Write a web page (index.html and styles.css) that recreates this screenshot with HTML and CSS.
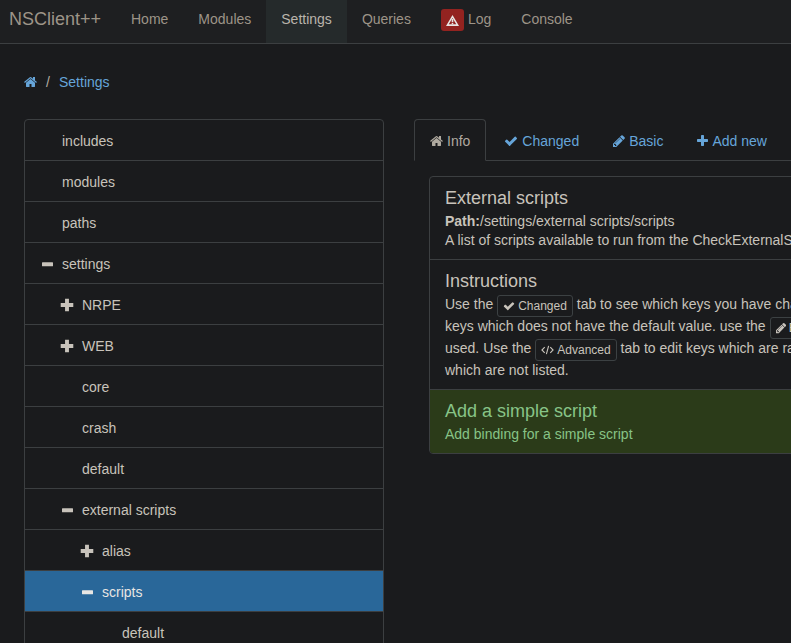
FILE: index.html
```html
<!DOCTYPE html>
<html lang="en">
<head>
<meta charset="utf-8">
<title>NSClient++</title>
<link rel="stylesheet" href="styles.css">
</head>
<body>
<svg class="defs" aria-hidden="true">
  <symbol id="home" viewBox="64 0 1664 1792"><path d="M1472 992v480q0 26-19 45t-45 19h-384v-384h-256v384h-384q-26 0-45-19t-19-45v-480q0-1 .5-3t.5-3l575-474 575 474q1 2 1 6zm223-69l-62 74q-8 9-21 11h-3q-13 0-21-7l-692-577-692 577q-12 8-24 7-13-2-21-11l-62-74q-8-10-7-23.500t11-21.500l719-599q32-26 76-26t76 26l244 204v-195q0-14 9-23t23-9h192q14 0 23 9t9 23v408l219 182q10 8 11 21.500t-7 23.500z"/></symbol>
  <symbol id="ok" viewBox="0 0 1792 1792"><path d="M1671 566q0 40-28 68l-724 724-136 136q-28 28-68 28t-68-28l-136-136-362-362q-28-28-28-68t28-68l136-136q28-28 68-28t68 28l294 295 656-657q28-28 68-28t68 28l136 136q28 28 28 68z"/></symbol>
  <symbol id="pencil" viewBox="128 0 1536 1792"><path d="M491 1536l91-91-235-235-91 91v107h128v128h107zm523-928q0-22-22-22-10 0-17 7l-542 542q-7 7-7 17 0 22 22 22 10 0 17-7l542-542q7-7 7-17zm-54-192l416 416-832 832h-416v-416zm683 96q0 53-37 90l-166 166-416-416 166-165q36-38 90-38 53 0 91 38l235 234q37 39 37 91z"/></symbol>
  <symbol id="add" viewBox="192 0 1408 1792"><path d="M1600 736v192q0 40-28 68t-68 28h-416v416q0 40-28 68t-68 28h-192q-40 0-68-28t-28-68v-416h-416q-40 0-68-28t-28-68v-192q0-40 28-68t68-28h416v-416q0-40 28-68t68-28h192q40 0 68 28t28 68v416h416q40 0 68 28t28 68z"/></symbol>
  <symbol id="plus" viewBox="0 0 14 14"><path d="M5.300 1.500h3.400v3.800h3.800v3.400H8.700v3.800H5.300V8.700H1.500V5.300h3.800z"/></symbol>
  <symbol id="minus" viewBox="0 0 14 14"><rect x="2" y="5.200" width="11" height="4" rx=".5"/></symbol>
  <symbol id="code" viewBox="0 0 14 12"><path d="M4 2.800 1 6l3 3.200M10 2.800 13 6l-3 3.200M8.200 1.500 5.800 10.500" fill="none" stroke="currentColor" stroke-width="1.200"/></symbol>
  <symbol id="alert" viewBox="0 0 13 11"><path d="M6.500 0 13 11H0zM6.500 3 2.800 9.300h7.400z" fill-rule="evenodd"/><path d="M5.700 4h1.600v3H5.700zM5.700 7.700h1.600v1.600H5.700z"/></symbol>
</svg>
<nav class="navbar">
  <a class="brand">NSClient++</a>
  <a class="nav-item">Home</a>
  <a class="nav-item">Modules</a>
  <a class="nav-item active">Settings</a>
  <a class="nav-item">Queries</a>
  <a class="nav-item"><span class="alert-badge"><svg><use href="#alert"/></svg></span>Log</a>
  <a class="nav-item">Console</a>
</nav>
<div class="breadcrumb"><svg class="icon home"><use href="#home"/></svg><span class="slash">/</span><a>Settings</a></div>
<main class="columns">
  <ul class="tree">
    <li><span class="toggle"></span>includes</li>
    <li><span class="toggle"></span>modules</li>
    <li><span class="toggle"></span>paths</li>
    <li><svg class="toggle"><use href="#minus"/></svg>settings</li>
    <li class="level-1"><svg class="toggle plus"><use href="#plus"/></svg>NRPE</li>
    <li class="level-1"><svg class="toggle plus"><use href="#plus"/></svg>WEB</li>
    <li class="level-1"><span class="toggle"></span>core</li>
    <li class="level-1"><span class="toggle"></span>crash</li>
    <li class="level-1"><span class="toggle"></span>default</li>
    <li class="level-1"><svg class="toggle"><use href="#minus"/></svg>external scripts</li>
    <li class="level-2"><svg class="toggle plus"><use href="#plus"/></svg>alias</li>
    <li class="level-2 selected"><svg class="toggle"><use href="#minus"/></svg>scripts</li>
    <li class="level-3"><span class="toggle"></span>default</li>
  </ul>
  <section class="content">
    <div class="tabs">
      <a class="tab current"><svg class="icon home"><use href="#home"/></svg>Info</a>
      <a class="tab"><svg class="icon"><use href="#ok"/></svg>Changed</a>
      <a class="tab"><svg class="icon pencil"><use href="#pencil"/></svg>Basic</a>
      <a class="tab"><svg class="icon add-icon"><use href="#add"/></svg>Add new</a>
    </div>
    <div class="panel">
      <article class="summary">
        <h4>External scripts</h4>
        <p><b>Path:</b>/settings/external scripts/scripts</p>
        <p>A list of scripts available to run from the CheckExternalScripts module</p>
      </article>
      <article class="instructions">
        <h4>Instructions</h4>
        <p>Use the <span class="button"><svg><use href="#ok"/></svg>Changed</span> tab to see which keys you have changed</p>
        <p>keys which does not have the default value. use the <span class="button"><svg class="small-pencil"><use href="#pencil"/></svg>Basic</span></p>
        <p>used. Use the <span class="button"><svg class="code"><use href="#code"/></svg>Advanced</span> tab to edit keys which are rarely used</p>
        <p>which are not listed.</p>
      </article>
      <article class="add">
        <h4>Add a simple script</h4>
        <p>Add binding for a simple script</p>
      </article>
    </div>
  </section>
</main>
</body>
</html>
```
FILE: styles.css
```css
* { box-sizing: border-box; }
html { height: 100%; overflow: hidden; }
body {
  margin: 0;
  height: 100%;
  overflow: hidden;
  background: #1a1b1d;
  color: #c8c3bb;
  font: 14px/20px "Liberation Sans", Arial, sans-serif;
  white-space: nowrap;
}
svg { fill: currentColor; }
.defs { display: none; }
.icon { width: 14px; height: 14px; flex: none; }
.icon.home { width: 13px; }
.icon.pencil { width: 12px; }
.icon.add-icon { width: 11px; }

.navbar {
  display: flex;
  height: 44px;
  background: #1e1f21;
  border-bottom: 1px solid #3c3f41;
  color: #9d9488;
}
.brand { width: 116px; padding: 9px 0 0 9px; font-size: 18px; }
.nav-item { display: flex; padding: 9px 15px 0; }
.nav-item.active { background: #252a2b; color: #bab4ab; }
.alert-badge {
  display: flex;
  align-items: center;
  justify-content: center;
  width: 23px;
  height: 22px;
  margin-right: 4px;
  border-radius: 3px;
  background: #932320;
  color: #e8e6e3;
}
.alert-badge svg { width: 13px; height: 11px; }

.breadcrumb { display: flex; align-items: center; margin: 28px 0 0 24px; color: #66a5d9; }
.slash { width: 22px; padding-left: 9px; color: #b2aca2; }

.columns { display: flex; gap: 30px; margin: 27px 0 0 24px; }
.tree {
  flex: none;
  width: 360px;
  margin: 0;
  padding: 0;
  list-style: none;
  border: 1px solid #3c3f41;
  border-radius: 4px 4px 0 0;
}
.tree li {
  display: flex;
  align-items: center;
  height: 41px;
  padding: 2px 0 0 15px;
  border-bottom: 1px solid #3c3f41;
}
.tree .level-1 { padding-left: 35px; }
.tree .level-2 { padding-left: 55px; }
.tree .level-3 { padding-left: 75px; }
.tree .selected { background: #296799; color: #e8e6e3; }
.toggle { width: 14px; height: 14px; margin-right: 8px; overflow: visible; }
.toggle.plus { width: 16px; height: 16px; margin: 0 7.500px 0 -1.500px; }

.content { flex: 1; min-width: 0; overflow: hidden; }
.tabs { display: flex; gap: 2px; height: 42px; border-bottom: 1px solid #3c3f41; }
.tab {
  display: flex;
  align-items: center;
  gap: 4px;
  height: 42px;
  padding: 2px 15px 0;
  border: 1px solid transparent;
  color: #66a5d9;
}
.tab.current {
  background: #1a1b1d;
  border-color: #3c3f41;
  border-bottom-color: #1a1b1d;
  border-radius: 4px 4px 0 0;
  color: #b0aaa0;
}

.panel { width: 600px; margin: 15px 0 0 15px; border: 1px solid #3c3f41; border-radius: 4px; overflow: hidden; }
article { padding: 11px 15px 9px; }
article + article { border-top: 1px solid #3c3f41; }
.summary { height: 82px; }
.instructions { height: 130px; }
.add { height: 64px; background: #2b3b19; color: #87c487; }
h4 { margin: 0 0 4px; font-size: 18px; font-weight: 400; line-height: 20px; }
p { margin: 0; height: 19px; line-height: 19px; }
.instructions p { height: 22px; line-height: 18px; }
.button {
  display: inline-flex;
  align-items: center;
  gap: 3px;
  height: 22px;
  margin-bottom: -1px;
  padding: 0 5px;
  border: 1px solid #3c4143;
  border-radius: 3px;
  font-size: 12px;
  line-height: 18px;
  vertical-align: middle;
}
.button svg { width: 12px; height: 12px; }
.button .small-pencil { width: 10.3px; }
.button .code { width: 13px; }
```
